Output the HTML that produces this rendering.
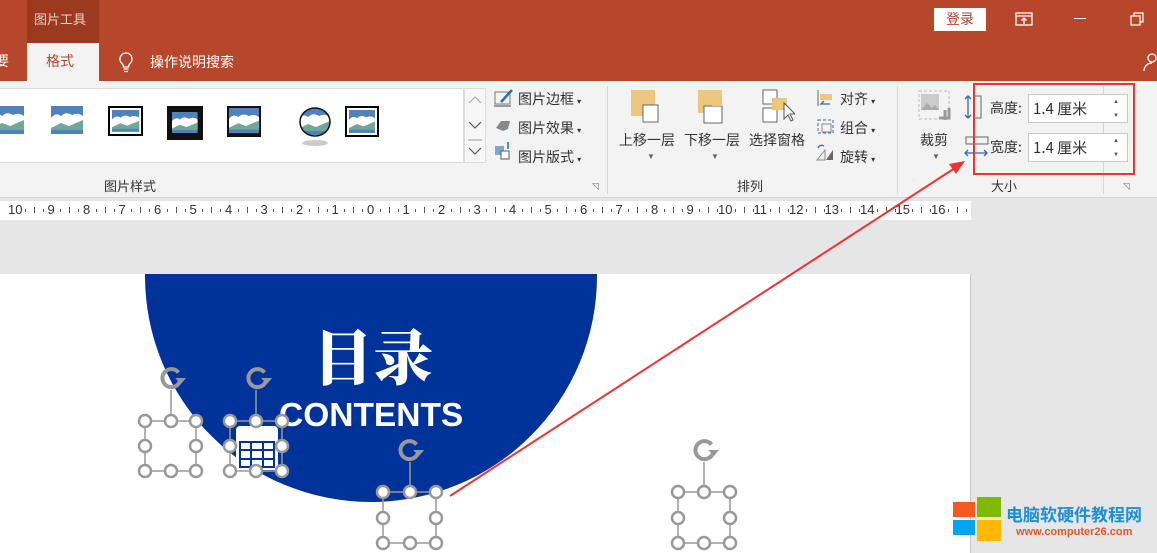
<!DOCTYPE html>
<html><head><meta charset="utf-8"><style>
*{margin:0;padding:0;box-sizing:border-box}
body{width:1157px;height:553px;overflow:hidden;position:relative;background:#e6e6e6;font-family:"Liberation Sans","Noto Sans CJK SC",sans-serif;font-size:14px;color:#333}
.a{position:absolute;white-space:nowrap}
.cn{font-family:"Noto Sans CJK SC",sans-serif}
</style></head><body>
<div class="a" style="left:0;top:0;width:1157px;height:81px;background:#b7472a"></div>
<div class="a" style="left:27px;top:0;width:72px;height:43px;background:#9c3a20"></div>
<div class="a cn" style="left:34px;top:9px;color:#f3d0c4;font-size:13px">图片工具</div>
<div class="a" style="left:27px;top:43px;width:72px;height:38px;background:#f3f3f3"></div>
<div class="a cn" style="left:46px;top:51px;color:#b7472a;font-size:14px">格式</div>
<div class="a cn" style="left:-5px;top:51px;color:#fff;font-size:14px">要</div>
<svg class="a" style="left:117px;top:51px" width="18" height="24"><path d="M9 2a6 6 0 0 0-4 10.5c1 1 1.5 2 1.5 3.5h5c0-1.5.5-2.5 1.5-3.5A6 6 0 0 0 9 2zM6.5 18h5M7 20.5h4" fill="none" stroke="#fff" stroke-width="1.3"/></svg>
<div class="a cn" style="left:150px;top:52px;color:#fff;font-size:14px">操作说明搜索</div>
<div class="a cn" style="left:934px;top:8px;width:52px;height:23px;background:#fff;color:#b7472a;text-align:center;font-size:14px;line-height:23px">登录</div>
<svg class="a" style="left:1014px;top:10px" width="20" height="18"><rect x="2" y="3" width="16" height="12" fill="none" stroke="#fff" stroke-width="1.3"/><path d="M2 6h16M10 14V8M7.5 10.5L10 8l2.5 2.5" fill="none" stroke="#fff" stroke-width="1.3"/></svg>
<div class="a" style="left:1074px;top:18px;width:12px;height:1px;background:#fff"></div>
<svg class="a" style="left:1129px;top:11px" width="16" height="16"><rect x="2" y="5" width="9" height="9" fill="none" stroke="#fff" stroke-width="1.2"/><path d="M5 5V2h9v9h-3" fill="none" stroke="#fff" stroke-width="1.2"/></svg>
<svg class="a" style="left:1143px;top:52px" width="14" height="20"><circle cx="9" cy="6" r="4" fill="none" stroke="#fff" stroke-width="1.3"/><path d="M1 19c0-5 4-8 8-8" fill="none" stroke="#fff" stroke-width="1.3"/></svg>

<div class="a" style="left:0;top:81px;width:1157px;height:117px;background:#f3f3f3;border-bottom:1px solid #d6d6d6"></div>
<div class="a" style="left:0;top:88px;width:464px;height:75px;background:#fff;border:1px solid #dcdcdc;border-left:none"></div>
<svg class="a" style="left:0;top:100px" width="460" height="50">
<defs><g id="p"><rect width="32" height="28" fill="#4f81bd"/><path d="M0 12q5-6 10-2 5-5 11-1 6-3 11 1v12H0z" fill="#fff"/><path d="M0 22l10-5 8 3 14-6v10H0z" fill="#6fa89a"/></g></defs>
<use href="#p" x="-8" y="6"/>
<use href="#p" x="51" y="6"/>
<rect x="108" y="6" width="35" height="30" fill="#000"/><rect x="110" y="8" width="31" height="26" fill="#fff"/><g transform="translate(112,10) scale(.85,.78)"><use href="#p"/></g>
<rect x="167" y="6" width="36" height="34" fill="#111"/><g transform="translate(172,12) scale(.8,.75)"><use href="#p"/></g>
<rect x="227" y="6" width="34" height="31" fill="#111"/><g transform="translate(229,8) scale(.94,.9)"><use href="#p"/></g>
<ellipse cx="315" cy="43" rx="13" ry="3" fill="#ccc"/><clipPath id="e"><ellipse cx="315" cy="22" rx="15" ry="14"/></clipPath><g clip-path="url(#e)"><use href="#p" x="298" y="7"/></g><ellipse cx="315" cy="22" rx="15" ry="14" fill="none" stroke="#111" stroke-width="1.5"/>
<rect x="345" y="6" width="34" height="31" fill="#000"/><rect x="347" y="8" width="30" height="27" fill="#fff"/><g transform="translate(349,10) scale(.81,.82)"><use href="#p"/></g>
</svg>
<div class="a" style="left:464px;top:88px;width:22px;height:75px;border:1px solid #dcdcdc;background:#f7f7f7"></div>
<svg class="a" style="left:464px;top:88px" width="22" height="75"><path d="M5 15l6-6 6 6M5 34l6 6 6-6M4 52h14M5 60l6 6 6-6" fill="none" stroke="#aaa" stroke-width="1.2"/><path d="M5 34l6 6 6-6M5 60l6 6 6-6" fill="none" stroke="#555"/></svg>
<svg class="a" style="left:493px;top:88px" width="22" height="74"><rect x="2" y="4" width="15" height="12" fill="none" stroke="#777"/><path d="M8 14l11-12" stroke="#2b6cb0" stroke-width="2.5"/><rect x="1" y="17" width="17" height="2" fill="#999"/><path d="M3 40l5-7h9l-2 8-5 2z" fill="#888"/><rect x="2" y="58" width="9" height="9" fill="#7ba7d0"/><rect x="8" y="63" width="8" height="8" fill="#fff" stroke="#555"/><path d="M15 54v7" stroke="#2b6cb0" stroke-width="1.5"/></svg>
<div class="a cn" style="left:518px;top:89px;font-size:14px">图片边框 <span style="font-size:8px">▾</span></div>
<div class="a cn" style="left:518px;top:118px;font-size:14px">图片效果 <span style="font-size:8px">▾</span></div>
<div class="a cn" style="left:518px;top:147px;font-size:14px">图片版式 <span style="font-size:8px">▾</span></div>
<div class="a cn" style="left:104px;top:176px;font-size:13px">图片样式</div>
<div class="a" style="left:592px;top:181px;font-size:9px;color:#777">◹</div>
<div class="a" style="left:607px;top:86px;width:1px;height:108px;background:#d6d6d6"></div>
<div class="a" style="left:897px;top:86px;width:1px;height:108px;background:#d6d6d6"></div>
<div class="a" style="left:1103px;top:86px;width:1px;height:108px;background:#d6d6d6"></div>
<svg class="a" style="left:620px;top:88px" width="175" height="40"><rect x="11" y="2" width="24" height="26" fill="#edc77e"/><rect x="23" y="17" width="15" height="17" fill="#fff" stroke="#666"/><rect x="78" y="2" width="24" height="23" fill="#edc77e"/><rect x="84" y="18" width="18" height="17" fill="#fff" stroke="#666"/><rect x="92" y="8" width="10" height="10" fill="#edc77e"/><rect x="143" y="2" width="14" height="14" fill="#fff" stroke="#666"/><rect x="143" y="20" width="14" height="14" fill="#fff" stroke="#666"/><rect x="152" y="10" width="15" height="12" fill="#edc77e"/><path d="M164 15v16l4-4 3 6 2-1-3-6h5z" fill="#fff" stroke="#555"/></svg>
<div class="a cn" style="left:619px;top:130px;font-size:14px">上移一层</div>
<div class="a cn" style="left:684px;top:130px;font-size:14px">下移一层</div>
<div class="a cn" style="left:749px;top:130px;font-size:14px">选择窗格</div>
<div class="a" style="left:647px;top:152px;font-size:8px;color:#666">▼</div>
<div class="a" style="left:711px;top:152px;font-size:8px;color:#666">▼</div>
<svg class="a" style="left:815px;top:88px" width="22" height="76"><path d="M3 2v16" stroke="#666"/><rect x="5" y="6" width="12" height="6" fill="#edc77e"/><path d="M15 16H6l3-3" fill="none" stroke="#2b6cb0" stroke-width="1.3"/><rect x="3" y="32" width="15" height="13" fill="none" stroke="#2b6cb0" stroke-dasharray="3 2"/><rect x="7" y="36" width="9" height="8" fill="none" stroke="#888"/><path d="M2 72l8-10v10z" fill="none" stroke="#888"/><path d="M11 72l7-10v10z" fill="#666"/><path d="M3 60a4 4 0 0 1 6-2" fill="none" stroke="#2b6cb0" stroke-width="1.3"/></svg>
<div class="a cn" style="left:840px;top:89px;font-size:14px">对齐 <span style="font-size:8px">▾</span></div>
<div class="a cn" style="left:840px;top:118px;font-size:14px">组合 <span style="font-size:8px">▾</span></div>
<div class="a cn" style="left:840px;top:147px;font-size:14px">旋转 <span style="font-size:8px">▾</span></div>
<div class="a cn" style="left:737px;top:176px;font-size:13px">排列</div>
<svg class="a" style="left:917px;top:90px" width="40" height="38"><rect x="2" y="1" width="30" height="28" fill="none" stroke="#bbb" stroke-dasharray="3 2"/><rect x="4" y="4" width="18" height="16" fill="#ccc"/><path d="M4 20l6-7 5 5 3-3 4 5z" fill="#aaa"/><path d="M22 28h10v-10M28 20v10" stroke="#999" stroke-width="3" fill="none"/></svg>
<div class="a cn" style="left:920px;top:130px;font-size:14px">裁剪</div>
<div class="a" style="left:932px;top:152px;font-size:8px;color:#666">▼</div>
<svg class="a" style="left:963px;top:93px" width="26" height="66"><rect x="11" y="3" width="7" height="22" fill="none" stroke="#666"/><path d="M5 3v22M2 6l3-3 3 3M2 22l3 3 3-3" fill="none" stroke="#2b6cb0" stroke-width="1.3"/><rect x="3" y="44" width="22" height="7" fill="none" stroke="#666"/><path d="M2 60h22M5 57l-3 3 3 3M21 57l3 3-3 3" fill="none" stroke="#2b6cb0" stroke-width="1.3"/></svg>
<div class="a cn" style="left:990px;top:98px;font-size:14px">高度:</div>
<div class="a cn" style="left:990px;top:137px;font-size:14px">宽度:</div>
<div class="a" style="left:1028px;top:94px;width:100px;height:29px;background:#fff;border:1px solid #c8c8c8"></div>
<div class="a" style="left:1028px;top:133px;width:100px;height:29px;background:#fff;border:1px solid #c8c8c8"></div>
<div class="a cn" style="left:1033px;top:98px;font-size:15px">1.4 厘米</div>
<div class="a cn" style="left:1033px;top:137px;font-size:15px">1.4 厘米</div>
<div class="a" style="left:1113px;top:95px;font-size:6px;color:#555;line-height:14px">▲<br>▼</div>
<div class="a" style="left:1113px;top:134px;font-size:6px;color:#555;line-height:14px">▲<br>▼</div>
<div class="a cn" style="left:991px;top:176px;font-size:13px">大小</div>
<div class="a" style="left:1123px;top:181px;font-size:9px;color:#777">◹</div>
<div class="a" style="left:973px;top:83px;width:162px;height:92px;border:2px solid #ee3333"></div>

<div class="a" style="left:0;top:201px;width:971px;height:19px;background:#fff"></div>
<div id="r" class="a" style="left:0;top:201px;width:971px;height:19px;font-size:13px;color:#333"></div>

<div class="a" style="left:0;top:274px;width:971px;height:279px;background:#fff;overflow:hidden"><div class="a" style="left:145px;top:-224px;width:452px;height:452px;border-radius:50%;background:#003399"></div></div>
<div class="a" style="left:0;top:274px;width:971px;height:279px;border-right:1px solid #c8c8c8"></div>
<div class="a" style="left:313px;top:322px;color:#fff;font-family:'Noto Serif CJK SC',serif;font-weight:900;font-size:60px;line-height:66px">目录</div>
<div class="a" style="left:279px;top:395px;color:#fff;font-weight:bold;font-size:33.5px;line-height:42px">CONTENTS</div>

<svg class="a" style="left:0;top:0" width="1157" height="553">
<defs><g id="rot"><path d="M7.5 -5.5A9 9 0 1 0 9 3" fill="none" stroke="#999" stroke-width="4"/><path d="M4 0l11 0-5 6z" fill="#999"/></g></defs>
<rect x="236" y="426" width="42" height="44" rx="4" fill="#fff"/>
<path d="M240 442h34v25h-34zM240 450h34M240 459h34M251 442v25M263 442v25" fill="none" stroke="#003399" stroke-width="2"/>
<g fill="none" stroke="#999" stroke-width="1.5">
<rect x="145" y="421" width="51" height="50"/><path d="M171 390v31"/>
<rect x="230" y="421" width="52" height="50"/><path d="M256 390v31"/>
<rect x="383" y="492" width="53" height="51"/><path d="M410 462v30"/>
<rect x="678" y="492" width="52" height="51"/><path d="M704 462v30"/>
</g>
<use href="#rot" x="171" y="378"/><use href="#rot" x="257" y="378"/><use href="#rot" x="409" y="450"/><use href="#rot" x="704" y="450"/>
<g fill="#fff" stroke="#999" stroke-width="2.5">
<circle cx="145" cy="421" r="6"/><circle cx="171" cy="421" r="6"/><circle cx="196" cy="421" r="6"/><circle cx="145" cy="446" r="6"/><circle cx="196" cy="446" r="6"/><circle cx="145" cy="471" r="6"/><circle cx="171" cy="471" r="6"/><circle cx="196" cy="471" r="6"/>
<circle cx="230" cy="421" r="6"/><circle cx="256" cy="421" r="6"/><circle cx="282" cy="421" r="6"/><circle cx="230" cy="446" r="6"/><circle cx="282" cy="446" r="6"/><circle cx="230" cy="471" r="6"/><circle cx="256" cy="471" r="6"/><circle cx="282" cy="471" r="6"/>
<circle cx="383" cy="492" r="6"/><circle cx="410" cy="492" r="6"/><circle cx="436" cy="492" r="6"/><circle cx="383" cy="518" r="6"/><circle cx="436" cy="518" r="6"/><circle cx="383" cy="543" r="6"/><circle cx="410" cy="543" r="6"/><circle cx="436" cy="543" r="6"/>
<circle cx="678" cy="492" r="6"/><circle cx="704" cy="492" r="6"/><circle cx="730" cy="492" r="6"/><circle cx="678" cy="518" r="6"/><circle cx="730" cy="518" r="6"/><circle cx="678" cy="543" r="6"/><circle cx="704" cy="543" r="6"/><circle cx="730" cy="543" r="6"/>
</g>
<path d="M450 496L955 168" stroke="#ee3333" stroke-width="2"/><path d="M965 161l-16 3 7 10z" fill="#ee3333"/>
<rect x="953" y="502" width="22" height="15" fill="#f25a22"/><rect x="977" y="497" width="24" height="20" fill="#7fba00"/><rect x="953" y="520" width="22" height="15" fill="#00a4ef"/><rect x="977" y="520" width="24" height="21" fill="#ffb900"/>
</svg>
<div class="a cn" style="left:1006px;top:501px;color:#1c8fd8;font-weight:bold;font-size:17px;letter-spacing:0">电脑软硬件教程网</div>
<div class="a" style="left:1016px;top:526px;color:#e8542b;font-weight:bold;font-size:11px">www.computer26.com</div>
<script>
var r=document.getElementById('r'),h='';
for(var n=-10;n<=16;n++){var x=371+n*35.5;h+='<span style="position:absolute;top:1px;left:'+(x-(Math.abs(n)>=10?8:4))+'px">'+Math.abs(n)+'</span>';
for(var k=1;k<4;k++){var tx=x+k*8.875;if(tx<968)h+='<span style="position:absolute;left:'+tx+'px;top:'+(k==2?6:8)+'px;width:1px;height:'+(k==2?6:3)+'px;background:#555"></span>';}}
r.innerHTML=h;
</script>
</body></html>
